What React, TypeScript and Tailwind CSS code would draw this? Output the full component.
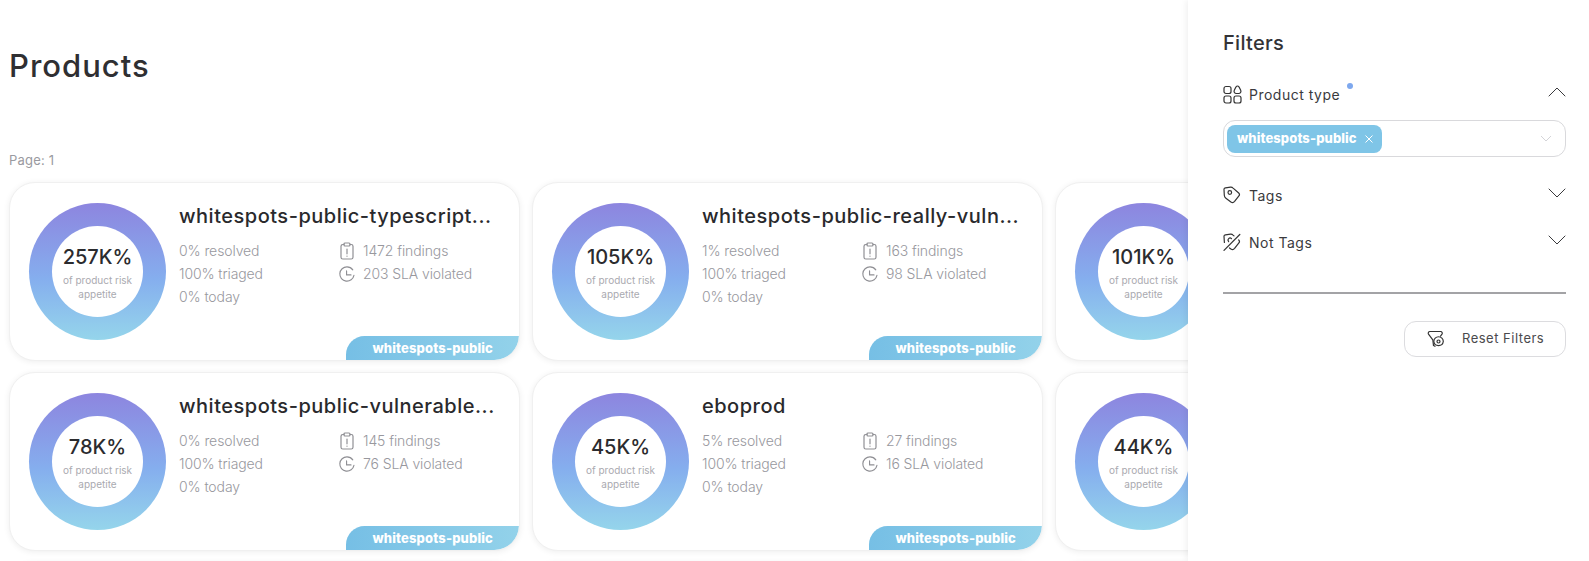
const font = { fontFamily: "Inter, 'Liberation Sans', sans-serif" };

type P = { pct: string; name?: string; resolved?: string; findings?: string; sla?: string };

const row1: P[] = [
  { pct: "257K%", name: "whitespots-public-typescript...", resolved: "0%", findings: "1472", sla: "203" },
  { pct: "105K%", name: "whitespots-public-really-vuln...", resolved: "1%", findings: "163", sla: "98" },
  { pct: "101K%" },
];
const row2: P[] = [
  { pct: "78K%", name: "whitespots-public-vulnerable...", resolved: "0%", findings: "145", sla: "76" },
  { pct: "45K%", name: "eboprod", resolved: "5%", findings: "27", sla: "16" },
  { pct: "44K%" },
];

function ClipIcon() {
  return (
    <svg width="14" height="18" viewBox="0 0 14 18" fill="none" stroke="#8f8f94" strokeWidth="1.2" strokeLinecap="round" strokeLinejoin="round">
      <path d="M4 2.500H2.800A1.800 1.800 0 0 0 1 4.300v10.900A1.800 1.800 0 0 0 2.800 17h8.400a1.800 1.800 0 0 0 1.800-1.800V4.300a1.800 1.800 0 0 0-1.800-1.800H10" />
      <rect x="4" y="1" width="6" height="3" rx="1" />
      <path d="M7 7v4.800M7 14v.2" />
    </svg>
  );
}

function ClockIcon() {
  return (
    <svg width="18" height="18" viewBox="0 0 18 18" fill="none" stroke="#8f8f94" strokeWidth="1.3" strokeLinecap="round" strokeLinejoin="round">
      <path d="M16.800 10.500A8 8 0 1 1 9 1a8 8 0 0 1 6.500 3.300" />
      <path d="M8.500 5.500V10h5" />
    </svg>
  );
}

function Donut({ pct }: { pct: string }) {
  return (
    <div className="w-[137px] h-[137px] shrink-0 rounded-full bg-[linear-gradient(180deg,#8d85df_0%,#85aeee_55%,#95d5eb_100%)] flex items-center justify-center">
      <div className="w-[91px] h-[91px] rounded-full bg-white flex flex-col items-center justify-center">
        <div className="mt-[2px] text-[20px] leading-[24px] text-[#2b2b2e] font-medium">{pct}</div>
        <div className="mt-[4px] text-[10px] leading-[14px] text-[#aaaab0] text-center w-[88px]">of product risk appetite</div>
      </div>
    </div>
  );
}

function Card({ p }: { p: P }) {
  return (
    <div className="relative w-[511px] h-[179px] shrink-0 rounded-[26px] bg-white border border-[#f0f0f0] shadow-[0_1px_6px_rgba(0,0,0,0.07)] overflow-hidden flex pl-[19px] pt-[20px]">
      <Donut pct={p.pct} />
      {p.name && (
        <div className="ml-[13px] flex-1 min-w-0">
          <div className="text-[20px] leading-[26px] font-medium text-[#29292c] whitespace-nowrap tracking-[0.5px]">{p.name}</div>
          <div className="mt-[10px] flex text-[14px] leading-[23px] font-light text-[#98989e] tracking-[-0.1px]">
            <div className="w-[160px]">
              <div>{p.resolved} resolved</div>
              <div>100% triaged</div>
              <div>0% today</div>
            </div>
            <div>
              <div className="flex items-center gap-[8px]"><span className="w-[16px] flex justify-center"><ClipIcon /></span>{p.findings} findings</div>
              <div className="flex items-center gap-[8px]"><span className="w-[16px] flex justify-center"><ClockIcon /></span>{p.sla} SLA violated</div>
            </div>
          </div>
        </div>
      )}
      {p.name && (
        <div className="absolute right-0 bottom-0 w-[173px] h-[24px] rounded-tl-[20px] rounded-br-[26px] bg-[linear-gradient(90deg,#76bfe5,#93d2ea)] text-white text-[13px] leading-[24px] font-extrabold text-right pr-[26px] whitespace-nowrap tracking-[0.15px]">
          whitespots-public
        </div>
      )}
    </div>
  );
}

function ShellCard() {
  return <div className="w-[511px] h-[179px] shrink-0 rounded-[26px] bg-white border border-[#f0f0f0] shadow-[0_1px_6px_rgba(0,0,0,0.07)]" />;
}

function Chevron({ up }: { up?: boolean }) {
  return (
    <svg width="18" height="10" viewBox="0 0 18 10" fill="none" stroke="#3a3a3d" strokeWidth="1" strokeLinecap="round" strokeLinejoin="round">
      <path d={up ? "M1 9 9 1l8 8" : "M1 1l8 8 8-8"} />
    </svg>
  );
}

function TypeIcon() {
  return (
    <svg width="19" height="19" viewBox="0 0 19 19" fill="none" stroke="#333" strokeWidth="1.2" strokeLinejoin="round">
      <rect x="1" y="1.500" width="7" height="7" rx="2" />
      <path d="M14.500 1c.7 0 1.200.5 1.600 1.100l1.600 3.200c.7 1.500-.3 3.200-2 3.200h-2.400c-1.700 0-2.700-1.700-2-3.200l1.600-3.200C13.300 1.500 13.800 1 14.500 1Z" />
      <rect x="1" y="11" width="7" height="7" rx="2" />
      <rect x="11" y="11" width="7" height="7" rx="2" />
    </svg>
  );
}

function TagIcon() {
  return (
    <svg width="18" height="18" viewBox="0 0 18 18" fill="none" stroke="#333" strokeWidth="1.200" strokeLinejoin="round">
      <path d="M2.500 1.800 7.500 1.200c1-.1 1.900.2 2.600.9l5.600 4.900c.9.800.9 2 .2 2.900l-4.300 5.500c-.9 1.100-2.500 1.400-3.700.5l-5-3.700c-1-.7-1.500-1.700-1.600-2.900L1 3.500c-.1-.8.600-1.600 1.500-1.700Z" />
      <circle cx="6.800" cy="6.500" r="1.800" />
    </svg>
  );
}

function NotTagIcon() {
  return (
    <svg width="18" height="18" viewBox="0 0 18 18" fill="none" stroke="#333" strokeWidth="1.200" strokeLinecap="round" strokeLinejoin="round">
      <path d="M1.400 9.500 1 3.500c-.1-.8.600-1.600 1.500-1.700l5-.6c1-.1 1.900.2 2.600.9l.9.8" />
      <path d="M15.700 7c.9.800.9 2 .2 2.900l-4.300 5.500c-.9 1.100-2.500 1.400-3.700.5l-1.400-1" />
      <path d="M5.600 8.500a1.800 1.800 0 0 1 2.900-2.800" />
      <path d="M1 17.300 16.800 1.500" />
    </svg>
  );
}

function ResetIcon() {
  return (
    <svg width="18" height="18" viewBox="0 0 18 18" fill="none" stroke="#333" strokeWidth="1.200" strokeLinecap="round" strokeLinejoin="round">
      <path d="M6.500 15.500 5.800 9.800 1.500 4.200C.8 3.200 1.500 1.500 2.800 1.500h10.900c1.300 0 2 1.700 1.300 2.700l-1.500 2" />
      <path d="M6.800 11.500a4.500 4.500 0 1 1 9.500 0 4.800 4.800 0 0 1-9.500 0Z" />
      <circle cx="11.500" cy="11.500" r="1.500" />
      <path d="M6.500 15.500l1.500.8" />
    </svg>
  );
}

function FilterRow({ icon, label, up, dot }: { icon: React.ReactNode; label: string; up?: boolean; dot?: boolean }) {
  return (
    <div className="flex items-center h-[22px]">
      <span className="w-[26px] flex shrink-0">{icon}</span>
      <span className="relative text-[14px] text-[#3a3a3d] tracking-[0.5px]">
        {label}
        {dot && <span className="absolute -right-[13px] -top-[1px] w-[6px] h-[6px] rounded-full bg-[#7ea8ee]" />}
      </span>
      <span className="ml-auto -translate-y-[2px] flex"><Chevron up={up} /></span>
    </div>
  );
}

export default function App() {
  return (
    <div style={font} className="w-[1589px] h-[561px] flex overflow-hidden bg-white">
      <main className="flex-1 min-w-0 pl-[9px] overflow-hidden">
        <h1 className="mt-[46px] text-[31px] leading-[40px] font-medium text-[#2f2f32] tracking-[1px]">Products</h1>
        <div className="mt-[66px] text-[13px] leading-[16px] text-[#9a9aa0] tracking-[0.2px]">Page: 1</div>
        <div className="mt-[14px] flex flex-col gap-[11px]">
          <div className="flex gap-[12px]">{row1.map((p) => <Card key={p.pct} p={p} />)}</div>
          <div className="flex gap-[12px]">{row2.map((p) => <Card key={p.pct} p={p} />)}</div>
          <div className="flex gap-[12px]"><ShellCard /><ShellCard /><ShellCard /></div>
        </div>
      </main>
      <aside className="relative z-10 w-[401px] shrink-0 h-full bg-white shadow-[-2px_0_6px_rgba(0,0,0,0.06)] pl-[35px] pr-[23px] pt-[29px]">
        <div className="text-[20px] leading-[28px] font-medium text-[#333336] tracking-[0.3px]">Filters</div>
        <div className="mt-[26px]"><FilterRow icon={<TypeIcon />} label="Product type" up dot /></div>
        <div className="mt-[15px] h-[37px] rounded-[12px] border border-[#d9d9dc] flex items-center pl-[3px] pr-[13px]">
          <div className="h-[28px] rounded-[8px] bg-[#7fc5e7] flex items-center pl-[10px] pr-[8px] gap-[7px]">
            <span className="text-white text-[13px] font-extrabold tracking-[0.1px]">whitespots-public</span>
            <svg width="10" height="10" viewBox="0 0 10 10" fill="none" stroke="#fff" strokeWidth="1"><path d="M1.500 1.500l7 7M8.500 1.500l-7 7" /></svg>
          </div>
          <svg className="ml-auto" width="12" height="7" viewBox="0 0 12 7" fill="none" stroke="#d4d4d8" strokeWidth="1"><path d="M1 1l5 5 5-5" /></svg>
        </div>
        <div className="mt-[27px]"><FilterRow icon={<TagIcon />} label="Tags" /></div>
        <div className="mt-[25px]"><FilterRow icon={<NotTagIcon />} label="Not Tags" /></div>
        <div className="mt-[39px] h-[2px] bg-[#a3a3a6]" />
        <div className="mt-[27px] flex justify-end">
          <button className="w-[162px] h-[36px] rounded-[12px] border border-[#dcdcdf] flex items-center pl-[22px] text-[13px] text-[#4a4a4d] tracking-[0.5px]">
            <ResetIcon />
            <span className="ml-[17px]">Reset Filters</span>
          </button>
        </div>
      </aside>
    </div>
  );
}
